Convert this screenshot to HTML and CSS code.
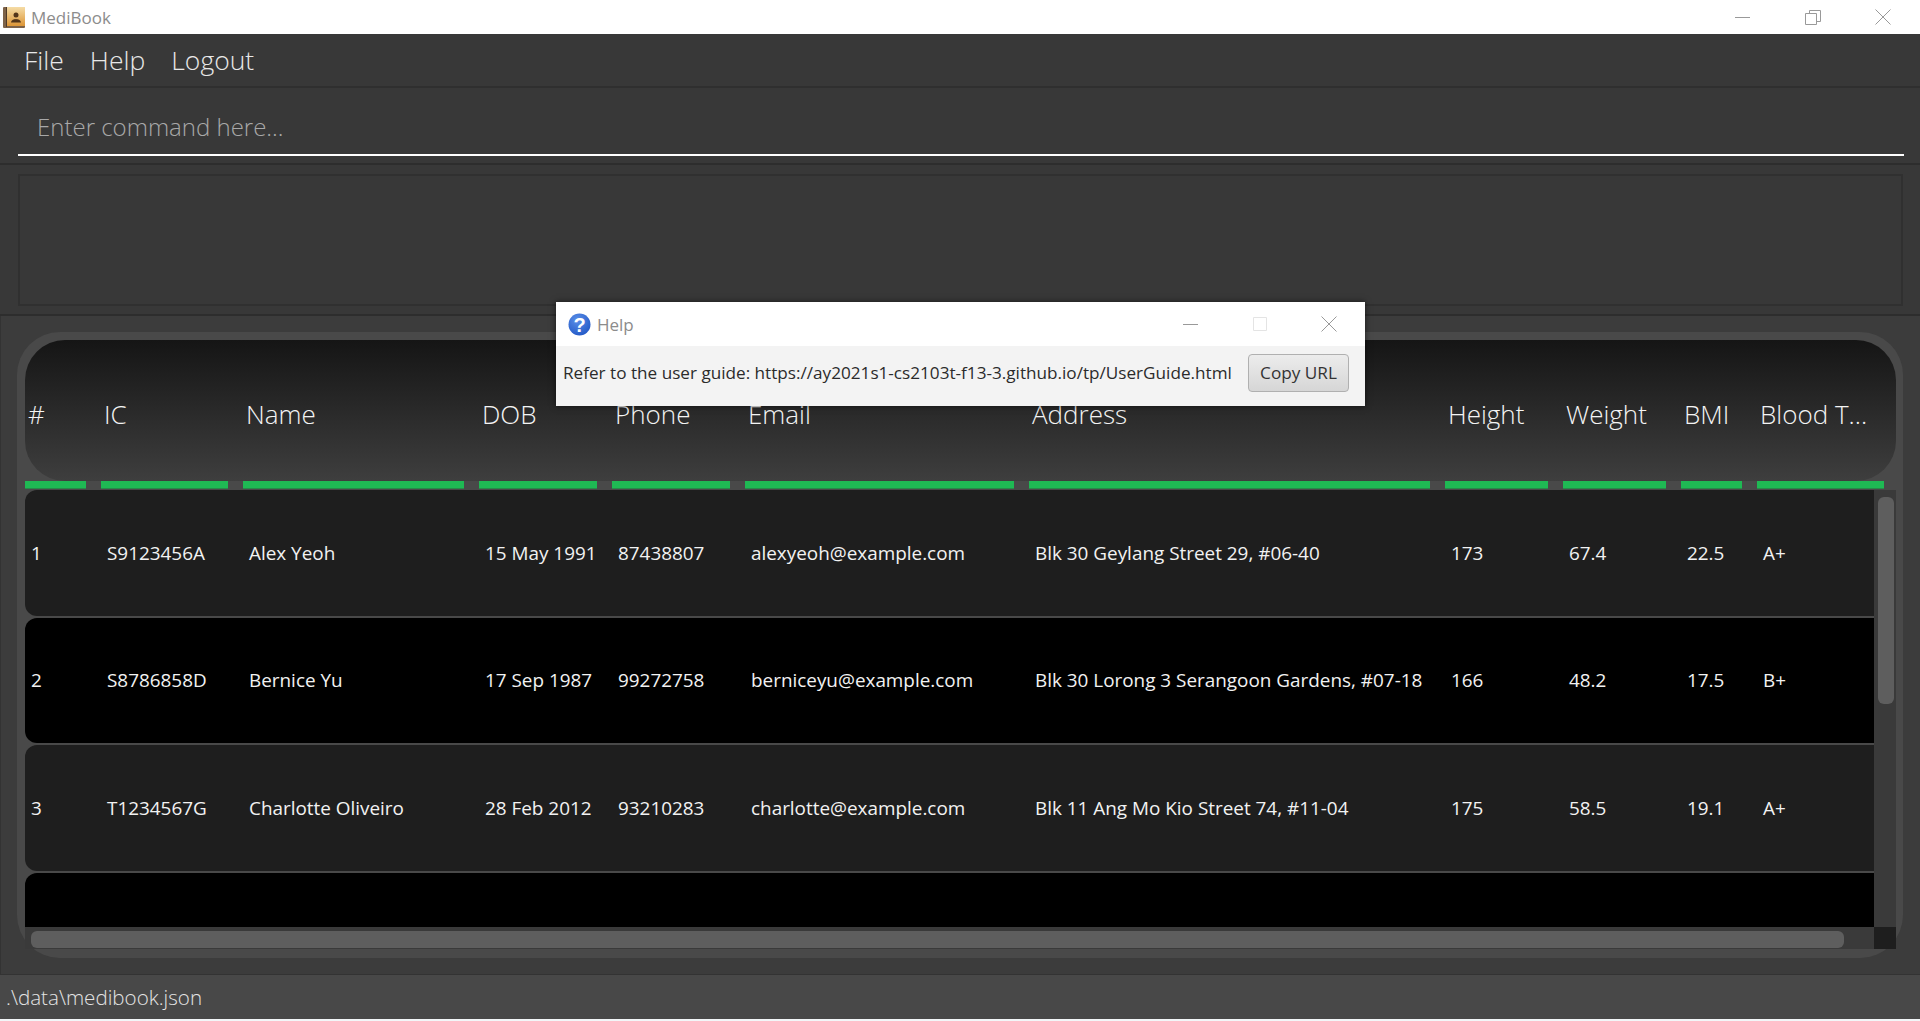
FILE: index.html
```html
<!DOCTYPE html>
<html>

<head lang="en">
    <meta charset="UTF-8">
    <title>MediBook</title>
    <link rel="stylesheet" href="styles.css">
</head>

<body>

    <div class="app">

        <div class="titlebar">
            <svg class="appicon" width="22" height="21" viewBox="0 0 22 21">
                <defs>
                    <linearGradient id="cover" x1="0" y1="0" x2="0" y2="1">
                        <stop offset="0" stop-color="#f5dca6" />
                        <stop offset="1" stop-color="#dc9536" />
                    </linearGradient>
                </defs>
                <rect x="0" y="0" width="22" height="21" rx="1" fill="#7d6248" />
                <rect x="3" y="0" width="1" height="20" fill="#4f3a28" />
                <rect x="4" y="0" width="18" height="19" fill="url(#cover)" />
                <circle cx="13" cy="8" r="2.5" fill="#533519" />
                <path d="M8 15.5 C8.5 12.5 11 12.5 13 12 C15 12.5 17.5 12.5 18 15.5 Z" fill="#533519" />
            </svg>
            <span class="appname">MediBook</span>
            <div class="winctl">
                <svg width="16" height="16" viewBox="0 0 16 16">
                    <path d="M0 8.5H15" stroke="#999" fill="none" />
                </svg>
                <svg width="16" height="16" viewBox="0 0 16 16">
                    <path d="M0.5 4.5H11.5V15.5H0.5Z M4.5 4.5V1.5H15.5V12.5H11.5" stroke="#999" fill="none" />
                </svg>
                <svg width="16" height="16" viewBox="0 0 16 16">
                    <path d="M0.5 0.5L15.5 15.5M15.5 0.5L0.5 15.5" stroke="#999" fill="none" />
                </svg>
            </div>
        </div>

        <div class="menubar">
            <span>File</span>
            <span>Help</span>
            <span>Logout</span>
        </div>

        <div class="command">
            <div class="command-input">Enter command here...</div>
        </div>

        <div class="result">
            <div class="result-box"></div>
        </div>

        <div class="listpanel">
            <div class="frame">

                <div class="thead">
                    <div class="cols">
                        <span>#</span>
                        <span>IC</span>
                        <span>Name</span>
                        <span>DOB</span>
                        <span>Phone</span>
                        <span>Email</span>
                        <span>Address</span>
                        <span>Height</span>
                        <span>Weight</span>
                        <span>BMI</span>
                        <span>Blood T...</span>
                    </div>
                </div>

                <div class="cols bars">
                    <i></i><i></i><i></i><i></i><i></i><i></i><i></i><i></i><i></i><i></i><i></i>
                </div>

                <div class="tbody">
                    <div class="rows">
                        <div class="cols row">
                            <span>1</span>
                            <span>S9123456A</span>
                            <span>Alex Yeoh</span>
                            <span>15 May 1991</span>
                            <span>87438807</span>
                            <span>alexyeoh@example.com</span>
                            <span>Blk 30 Geylang Street 29, #06-40</span>
                            <span>173</span>
                            <span>67.4</span>
                            <span>22.5</span>
                            <span>A+</span>
                        </div>
                        <div class="cols row">
                            <span>2</span>
                            <span>S8786858D</span>
                            <span>Bernice Yu</span>
                            <span>17 Sep 1987</span>
                            <span>99272758</span>
                            <span>berniceyu@example.com</span>
                            <span>Blk 30 Lorong 3 Serangoon Gardens, #07-18</span>
                            <span>166</span>
                            <span>48.2</span>
                            <span>17.5</span>
                            <span>B+</span>
                        </div>
                        <div class="cols row">
                            <span>3</span>
                            <span>T1234567G</span>
                            <span>Charlotte Oliveiro</span>
                            <span>28 Feb 2012</span>
                            <span>93210283</span>
                            <span>charlotte@example.com</span>
                            <span>Blk 11 Ang Mo Kio Street 74, #11-04</span>
                            <span>175</span>
                            <span>58.5</span>
                            <span>19.1</span>
                            <span>A+</span>
                        </div>
                        <div class="cols row"></div>
                    </div>
                    <div class="vscroll">
                        <div class="vthumb"></div>
                    </div>
                </div>

                <div class="hscrollbar">
                    <div class="hscroll">
                        <div class="hthumb"></div>
                    </div>
                    <div class="corner"></div>
                </div>

            </div>
        </div>

        <div class="status">.\data\medibook.json</div>
        <div class="bottomline"></div>

    </div>

    <div class="dialog">
        <div class="dialog-title">
            <svg width="23" height="23" viewBox="0 0 23 23">
                <defs>
                    <radialGradient id="ball" cx="0.4" cy="0.3" r="0.8">
                        <stop offset="0" stop-color="#5b8fe8" />
                        <stop offset="1" stop-color="#1f55c4" />
                    </radialGradient>
                </defs>
                <circle cx="11.5" cy="11.5" r="11" fill="url(#ball)" />
                <text x="11.5" y="18.5" class="qmark">?</text>
            </svg>
            <span class="dialog-name">Help</span>
            <div class="dialog-ctl">
                <svg width="16" height="16" viewBox="0 0 16 16">
                    <path d="M0 8.5H15" stroke="#999" fill="none" />
                </svg>
                <svg width="16" height="16" viewBox="0 0 16 16">
                    <path d="M1.5 1.5H14.5V14.5H1.5Z" stroke="#e4e4e4" fill="none" />
                </svg>
                <svg width="16" height="16" viewBox="0 0 16 16">
                    <path d="M0.5 0.5L15.5 15.5M15.5 0.5L0.5 15.5" stroke="#999" fill="none" />
                </svg>
            </div>
        </div>
        <div class="dialog-body">
            <span class="dialog-text">Refer to the user guide: https://ay2021s1-cs2103t-f13-3.github.io/tp/UserGuide.html</span>
            <button class="copybtn">Copy URL</button>
        </div>
    </div>

</body>

</html>
```

FILE: styles.css
```css
* {
    box-sizing: border-box;
}

html,
body {
    margin: 0;
    height: 100%;
    overflow: hidden;
}

body {
    font-family: "Open Sans", "Noto Sans", "Liberation Sans", sans-serif;
    position: relative;
}

.app {
    height: 1021px;
    display: flex;
    flex-direction: column;
    background: #383838;
}

/* window title */
.titlebar {
    height: 34px;
    background: #fff;
    display: flex;
    align-items: center;
    padding-left: 3px;
}

.appname {
    margin-left: 6px;
    font-size: 17px;
    color: #8c8c8c;
}

.winctl {
    margin-left: auto;
    display: flex;
    gap: 54px;
    padding-right: 29px;
}

.menubar {
    height: 54px;
    display: flex;
    align-items: center;
    gap: 26px;
    padding-left: 24px;
    font-size: 26.5px;
    font-weight: 300;
    color: #e8e8e8;
    border-bottom: 2px solid #2f2f2f;
}

.command {
    height: 77px;
    padding: 0 16px 0 18px;
    border-bottom: 2px solid #2d2d2d;
}

.command-input {
    height: 68px;
    padding: 21px 0 0 19px;
    font-size: 24px;
    line-height: 36px;
    font-weight: 300;
    color: #a8a8a8;
    border-bottom: 2px solid #fff;
}

.result {
    height: 151px;
    padding: 9px 17px 8px 18px;
    border-bottom: 2px solid #2d2d2d;
}

.result-box {
    height: 100%;
    border: 2px solid #303030;
}

/* person list */
.listpanel {
    flex: 1;
    min-height: 0;
    padding: 16px 17px 16px 17px;
    background: #3c3c3c;
    border-left: 1px solid #333;
}

.frame {
    height: 100%;
    margin-left: -1px;
    padding: 8px 7px 9px 8px;
    background: #494949;
    border-radius: 43px;
    display: flex;
    flex-direction: column;
}

.cols {
    display: grid;
    grid-template-columns: 61px 127px 221px 118px 118px 269px 401px 103px 103px 61px 127px;
    column-gap: 15px;
}

.thead {
    height: 141px;
    flex: none;
    padding-top: 7px;
    border-radius: 40px;
    background: linear-gradient(#151515, #3e3e3e);
    display: flex;
    align-items: center;
    font-size: 26px;
    font-weight: 300;
    color: #f4f4f4;
}

.thead .cols {
    width: 100%;
}

.thead span {
    padding-left: 3px;
    white-space: nowrap;
}

.bars {
    flex: none;
    height: 9px;
}

.bars i {
    display: block;
    height: 8px;
    background: #1fb954;
    border-bottom: 1px solid #278a49;
}

.tbody {
    flex: 1;
    min-height: 0;
    display: flex;
    overflow: hidden;
}

.rows {
    width: 1849px;
    flex: none;
    display: flex;
    flex-direction: column;
    gap: 2px;
    overflow: hidden;
}

/* rows are wider than the viewport, the right side is cut off by the scrollbar */
.row {
    width: 1880px;
    height: 125.5px;
    flex: none;
    align-items: center;
    border-radius: 12px;
    background: #1e1e1e;
    font-size: 18.9px;
    color: #f2f2f2;
}

.row:nth-child(even) {
    background: #000;
}

.row span {
    padding-left: 6px;
    white-space: nowrap;
}

.vscroll {
    flex: 1;
    padding: 7px 2px 0 4px;
    background: #3a3a3a;
}

.vthumb {
    height: 207px;
    border-radius: 6px;
    background: #5e5e5e;
}

.hscrollbar {
    flex: none;
    height: 22px;
    display: flex;
}

.hscroll {
    width: 1849px;
    padding: 4px 30px 1px 6px;
    background: #3a3a3a;
}

.hthumb {
    height: 100%;
    border-radius: 6px;
    background: #5e5e5e;
}

.corner {
    flex: 1;
    background: #1e1e1e;
}

.status {
    height: 45px;
    padding: 0 0 0 6px;
    display: flex;
    align-items: center;
    background: #484848;
    border-top: 1px solid #333;
    font-size: 20.6px;
    font-weight: 300;
    color: #e4e4e4;
}

.bottomline {
    height: 2px;
    background: #f2f6f8;
}

/* help window */
.dialog {
    position: absolute;
    left: 556px;
    top: 302px;
    width: 809px;
    height: 104px;
    background: #f3f3f3;
    box-shadow: 0 0 6px rgba(0, 0, 0, 0.6);
}

.dialog-title {
    height: 44px;
    background: #fff;
    display: flex;
    align-items: center;
    padding-left: 12px;
}

.dialog-name {
    margin-left: 6px;
    font-size: 17px;
    color: #8c8c8c;
}

.dialog-ctl {
    margin-left: auto;
    display: flex;
    gap: 53px;
    padding-right: 28px;
}

.qmark {
    font-family: "Liberation Sans", sans-serif;
    font-size: 20px;
    font-weight: bold;
    fill: #fff;
    text-anchor: middle;
}

.dialog-body {
    height: 60px;
    display: flex;
    align-items: center;
    padding: 0 16px 7px 7px;
}

.dialog-text {
    font-size: 17.15px;
    color: #2b2b2b;
    white-space: nowrap;
}

.copybtn {
    margin-left: auto;
    flex: none;
    width: 101px;
    height: 38px;
    padding: 0;
    font-family: inherit;
    font-size: 17.2px;
    color: #333;
    border: 1px solid #b0b0b0;
    border-radius: 4px;
    background: linear-gradient(#ececec, #d6d6d6);
}
```
